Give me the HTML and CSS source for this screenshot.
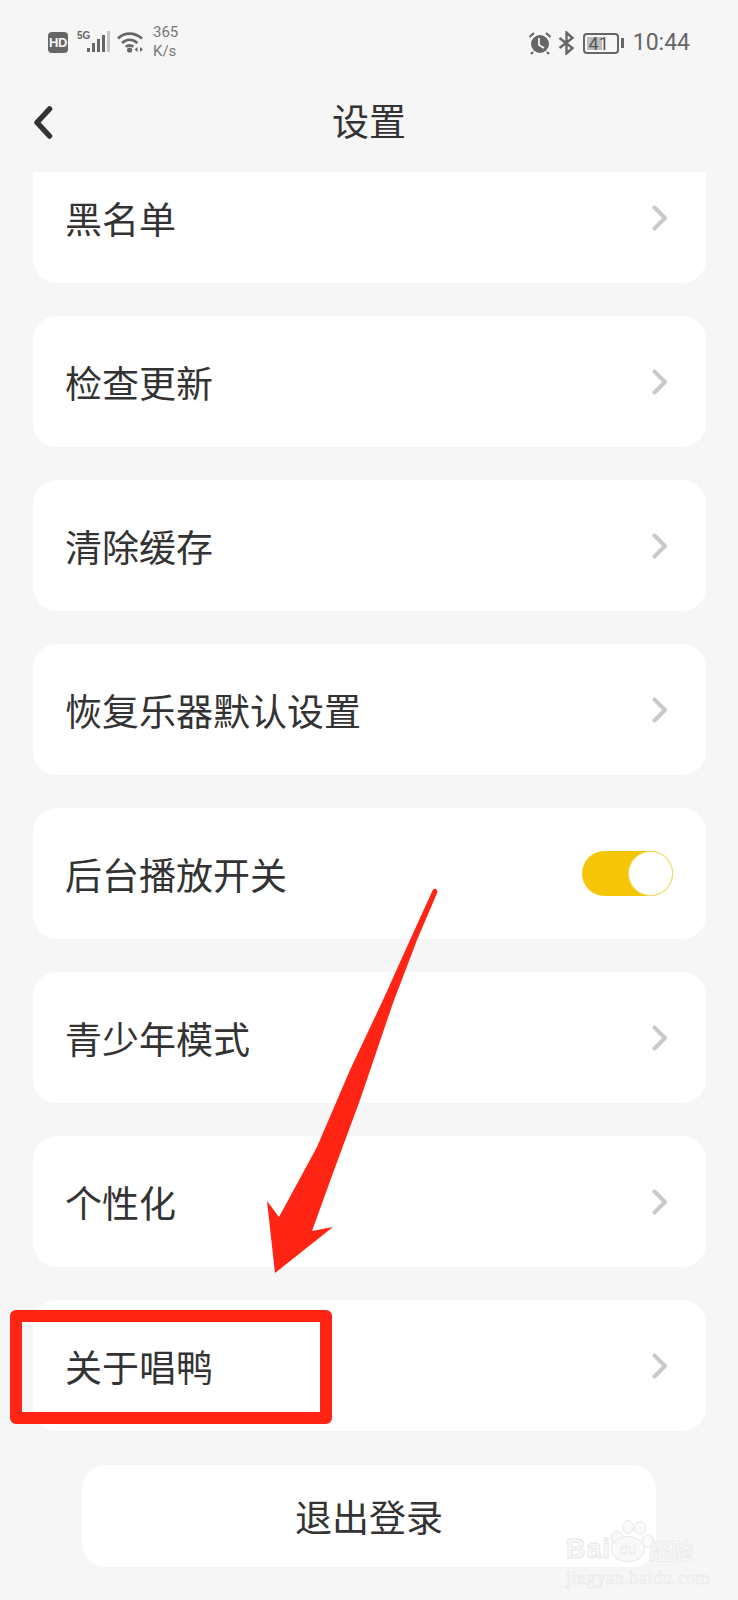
FILE: index.html
```html
<!DOCTYPE html>
<html lang="zh-CN">
<head>
<meta charset="utf-8">
<title>设置</title>
<link rel="stylesheet" href="styles.css">
</head>
<body>
<div class="screen">
  <div class="status">
    <div class="status-group">
      <span class="hd">HD</span>
      <div class="signal">
        <span class="five-g">5G</span>
        <svg class="bars" width="23" height="22" viewBox="0 0 23 22"><rect x="0" y="17" width="3" height="4" fill="#666"/><rect x="5" y="12" width="3" height="9" fill="#666"/><rect x="10" y="8" width="3" height="13" fill="#666"/><rect x="15" y="4" width="3" height="17" fill="#666"/><rect x="20" y="0" width="3" height="21" fill="#c4c4c4"/></svg>
      </div>
      <svg class="wifi" width="27" height="22" viewBox="0 0 27 22"><g fill="none" stroke="#666" stroke-width="2.6"><path d="M1 7.5C7.5 1 17.5 1 25 7.5"/><path d="M5 12C9.5 7.8 15.5 7.8 20.5 12"/><path d="M8.8 15.8C11 14 14 14 16.4 15.8"/></g><circle cx="12.6" cy="19" r="2.6" fill="#666"/><path d="M17.5 18.5l3-2.6v5.2zM23 15.9l3 2.6-3 2.6z" fill="#666"/></svg>
      <div class="speed"><span>365</span><span>K/s</span></div>
    </div>
    <div class="status-group right">
      <svg width="24" height="24" viewBox="0 0 24 24"><circle cx="12" cy="13" r="9" fill="#666"/><path d="M1.5 6L6 2M22.5 6L18 2M5 21l-2 2M19 21l2 2" stroke="#666" stroke-width="2.2" fill="none"/><path d="M11 7v7l5 3" stroke="#f6f6f6" stroke-width="1.8" fill="none"/></svg>
      <svg class="bt" width="17" height="24" viewBox="0 0 17 24"><path d="M1.5 7l13 10-6 5.5V1.500l6 5.500-13 10" fill="none" stroke="#666" stroke-width="2.400"/></svg>
      <div class="battery-wrap">
        <div class="battery"><span class="battery-fill"></span><span class="battery-num">41</span></div>
        <span class="battery-nub"></span>
      </div>
      <span class="time">10:44</span>
    </div>
  </div>

  <header class="header">
    <svg class="back" width="20" height="33" viewBox="0 0 20 33"><path d="M16.500 3L4 16.500 16.500 30" fill="none" stroke="#333" stroke-width="5.500" stroke-linecap="round" stroke-linejoin="round"/></svg>
    <h1 class="title">设置</h1>
    <span></span>
  </header>

  <div class="viewport">
    <div class="list">
      <div class="card"><span class="label">黑名单</span><svg class="chev" width="16" height="26" viewBox="0 0 16 26"><path d="M2.500 2.500L13 13 2.500 23.500" fill="none" stroke="#c9c9c9" stroke-width="4" stroke-linecap="round" stroke-linejoin="round"/></svg></div>
      <div class="card"><span class="label">检查更新</span><svg class="chev" width="16" height="26" viewBox="0 0 16 26"><path d="M2.500 2.500L13 13 2.500 23.500" fill="none" stroke="#c9c9c9" stroke-width="4" stroke-linecap="round" stroke-linejoin="round"/></svg></div>
      <div class="card"><span class="label">清除缓存</span><svg class="chev" width="16" height="26" viewBox="0 0 16 26"><path d="M2.500 2.500L13 13 2.500 23.500" fill="none" stroke="#c9c9c9" stroke-width="4" stroke-linecap="round" stroke-linejoin="round"/></svg></div>
      <div class="card"><span class="label">恢复乐器默认设置</span><svg class="chev" width="16" height="26" viewBox="0 0 16 26"><path d="M2.500 2.500L13 13 2.500 23.500" fill="none" stroke="#c9c9c9" stroke-width="4" stroke-linecap="round" stroke-linejoin="round"/></svg></div>
      <div class="card"><span class="label">后台播放开关</span><div class="toggle"><span class="knob"></span></div></div>
      <div class="card"><span class="label">青少年模式</span><svg class="chev" width="16" height="26" viewBox="0 0 16 26"><path d="M2.500 2.500L13 13 2.500 23.500" fill="none" stroke="#c9c9c9" stroke-width="4" stroke-linecap="round" stroke-linejoin="round"/></svg></div>
      <div class="card"><span class="label">个性化</span><svg class="chev" width="16" height="26" viewBox="0 0 16 26"><path d="M2.500 2.500L13 13 2.500 23.500" fill="none" stroke="#c9c9c9" stroke-width="4" stroke-linecap="round" stroke-linejoin="round"/></svg></div>
      <div class="card"><span class="label">关于唱鸭</span><svg class="chev" width="16" height="26" viewBox="0 0 16 26"><path d="M2.500 2.500L13 13 2.500 23.500" fill="none" stroke="#c9c9c9" stroke-width="4" stroke-linecap="round" stroke-linejoin="round"/></svg></div>
    </div>
  </div>

  <div class="logout-row"><button class="logout">退出登录</button></div>

  <svg class="arrow" width="738" height="1600" viewBox="0 0 738 1600"><path d="M433 889.500Q436.500 887 437.500 892L417 940 393 1003 360 1100 333 1173 312 1231 333 1227 275 1273 267 1201 279 1217 317 1147 350 1070 383 1000 410 940Z" fill="#ff2414"/></svg>
  <div class="redbox"></div>

  <div class="watermark">
    <svg class="paw" width="44" height="42" viewBox="0 0 44 42"><g fill="#f9f9f9" stroke="#e8e8e8" stroke-width="1"><ellipse cx="7" cy="18" rx="6" ry="7"/><ellipse cx="18" cy="7" rx="5.500" ry="6.500"/><ellipse cx="30" cy="8" rx="5.500" ry="6.500"/><ellipse cx="38" cy="21" rx="5.500" ry="6.500"/></g></svg>
    <div class="wm-main"><span class="wm-baidu">Bai</span><span class="wm-du">du</span><span class="wm-cn">经验</span></div>
    <div class="wm-url">jingyan.baidu.com</div>
  </div>
</div>
</body>
</html>
```
FILE: styles.css
```css
* { box-sizing: border-box; }
html, body { margin: 0; padding: 0; }
body { background: #f6f6f6; font-family: "Noto Sans CJK SC", "Noto Sans", sans-serif; color: #333; }
.screen { position: relative; width: 738px; height: 1600px; overflow: hidden; background: #f6f6f6; }

.status { height: 84px; padding: 24px 48px 0; display: flex; justify-content: space-between; align-items: flex-start; color: #666; }
.status-group { display: flex; align-items: center; height: 36px; }
.status-group.right { gap: 6px; padding-top: 2px; }
.hd { width: 20px; height: 21px; border-radius: 4px; background: #666; color: #f6f6f6; font: 700 13px/21px "Liberation Sans", sans-serif; text-align: center; letter-spacing: -0.5px; }
.signal { position: relative; display: flex; align-items: flex-end; height: 22px; width: 33px; margin-left: 9px; justify-content: flex-end; }
.five-g { position: absolute; left: 0; top: -1px; font: 700 10px/11px "Liberation Sans", sans-serif; color: #666; }
.bars { display: block; }
.wifi { margin-left: 7px; }
.speed { display: flex; flex-direction: column; margin-left: 9px; font: 400 15px/19px "Roboto", sans-serif; color: #777; width: 28px; }
.battery-wrap { display: flex; align-items: center; margin-left: 2px; }
.battery { position: relative; width: 36px; height: 21px; border: 2px solid #666; border-radius: 4px; overflow: hidden; }
.battery-fill { position: absolute; left: 2px; top: 2px; bottom: 2px; width: 15px; background: #bdbdbd; }
.battery-num { position: relative; display: block; text-align: center; font: 400 18px/17px "Roboto", sans-serif; color: #555; margin-right: 4px; }
.battery-nub { width: 3px; height: 10px; background: #666; margin-left: 2px; }
.time { font: 400 23px/36px "Roboto", sans-serif; color: #666; margin-left: 3px; }

.header { height: 76px; padding: 0 33px; display: grid; grid-template-columns: 1fr auto 1fr; align-items: center; }
.back { display: block; }
.title { margin: 0 0 4px; font-size: 37px; font-weight: 400; line-height: 72px; color: #333; }

.viewport { margin: 12px 32px 0 33px; height: 1261px; overflow: hidden; }
.list { display: flex; flex-direction: column; gap: 33px; margin-top: -20px; }
.card { height: 131px; background: #fff; border-radius: 24px; padding: 0 33px 0 32px; display: flex; align-items: center; justify-content: space-between; flex: none; }
.label { font-size: 37px; line-height: 50px; color: #333; padding-top: 1px; }
.chev { display: block; margin-right: 5px; }
.toggle { width: 91px; height: 45px; border-radius: 23px; background: #f5c608; display: flex; justify-content: flex-end; }
.knob { width: 45px; height: 45px; border-radius: 50%; background: #fff; border: 1px solid #f0dc6a; }

.logout-row { display: flex; justify-content: center; margin-top: 32px; }
.logout { width: 574px; height: 102px; border: 0; border-radius: 24px; background: #fff; font: inherit; font-size: 37px; color: #333; padding: 0; }

.arrow { position: absolute; left: 0; top: 0; pointer-events: none; }
.redbox { position: absolute; left: 10px; top: 1310px; width: 322px; height: 114px; border: 12px solid #ff2414; border-radius: 6px; }

.watermark { position: absolute; left: 566px; top: 1518px; width: 140px; }
.paw { position: absolute; left: 44px; top: 2px; }
.wm-main { position: relative; display: flex; align-items: center; height: 30px; margin-top: 16px; font-family: "Liberation Sans", sans-serif; color: #f9f9f9; -webkit-text-stroke: 1px #e8e8e8; }
.wm-baidu { font-size: 27px; font-weight: 700; letter-spacing: 1px; line-height: 30px; }
.wm-du { width: 34px; height: 26px; border-radius: 50%; border: 1px solid #e8e8e8; background: #f9f9f9; font-size: 15px; line-height: 24px; text-align: center; -webkit-text-stroke: 0.5px #e8e8e8; }
.wm-cn { font-family: "Noto Sans CJK SC", sans-serif; font-size: 22px; line-height: 30px; margin-left: 4px; -webkit-text-stroke: 0.7px #e8e8e8; font-weight: 700; }
.wm-url { position: relative; margin-top: 4px; font: 400 18px/20px "Liberation Serif", serif; color: #f9f9f9; -webkit-text-stroke: 0.6px #e8e8e8; white-space: nowrap; letter-spacing: 0.6px; }
```
